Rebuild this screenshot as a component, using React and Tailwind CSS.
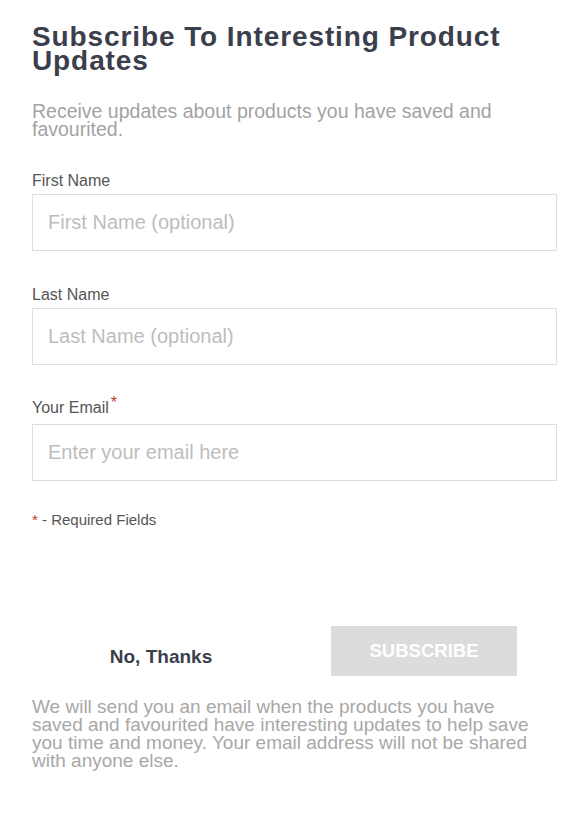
export default function App() {
    return (
        <div className="min-h-[817px] w-[562px] bg-white pl-8 pr-[5px] pt-[25px] font-['Liberation_Sans',Arial,sans-serif]">
            <h1 className="text-[28px] font-bold leading-[24px] tracking-[0.9px] text-[#3b3e4b]">
                Subscribe To Interesting Product Updates
            </h1>
            <p className="mt-[29px] text-[19.5px] leading-[18px] text-[#a3a3a3]">
                Receive updates about products you have saved and favourited.
            </p>
            <form className="mt-[35px]">
                <label className="block text-[16px] leading-[16px] text-[#555]">First Name</label>
                <input
                    type="text"
                    placeholder="First Name (optional)"
                    className="mt-[5px] block h-[57px] w-full border border-[#dedede] px-[15px] text-[20px] outline-none placeholder:text-[#bdbdbd]"
                />
                <label className="mt-[36px] block text-[16px] leading-[16px] text-[#555]">Last Name</label>
                <input
                    type="text"
                    placeholder="Last Name (optional)"
                    className="mt-[5px] block h-[57px] w-full border border-[#dedede] px-[15px] text-[20px] outline-none placeholder:text-[#bdbdbd]"
                />
                <label className="mt-[35px] block text-[16px] leading-[16px] text-[#555]">
                    Your Email<span className="relative -top-[5px] ml-[2px] text-[#c0392b]">*</span>
                </label>
                <input
                    type="email"
                    placeholder="Enter your email here"
                    className="mt-[8px] block h-[57px] w-full border border-[#dedede] px-[15px] text-[20px] outline-none placeholder:text-[#bdbdbd]"
                />
                <p className="mt-[31px] text-[15px] leading-[16px] text-[#555]">
                    <span className="text-[#c0392b]">*</span> - Required Fields
                </p>
                <div className="mt-[98px] flex items-center">
                    <button type="button" className="w-[258px] pt-[12px] text-[19px] font-bold text-[#3b3e4b]">
                        No, Thanks
                    </button>
                    <button
                        type="submit"
                        disabled
                        className="ml-[41px] h-[50px] w-[186px] bg-[#dcdcdc] text-[18.5px] font-bold text-white"
                    >
                        SUBSCRIBE
                    </button>
                </div>
            </form>
            <p className="mt-[22px] max-w-[509px] text-[19px] leading-[18px] text-[#a8a8a8]">
                We will send you an email when the products you have saved and favourited have interesting updates to help save you time and money. Your email address will not be shared with anyone else.
            </p>
        </div>
    );
}
